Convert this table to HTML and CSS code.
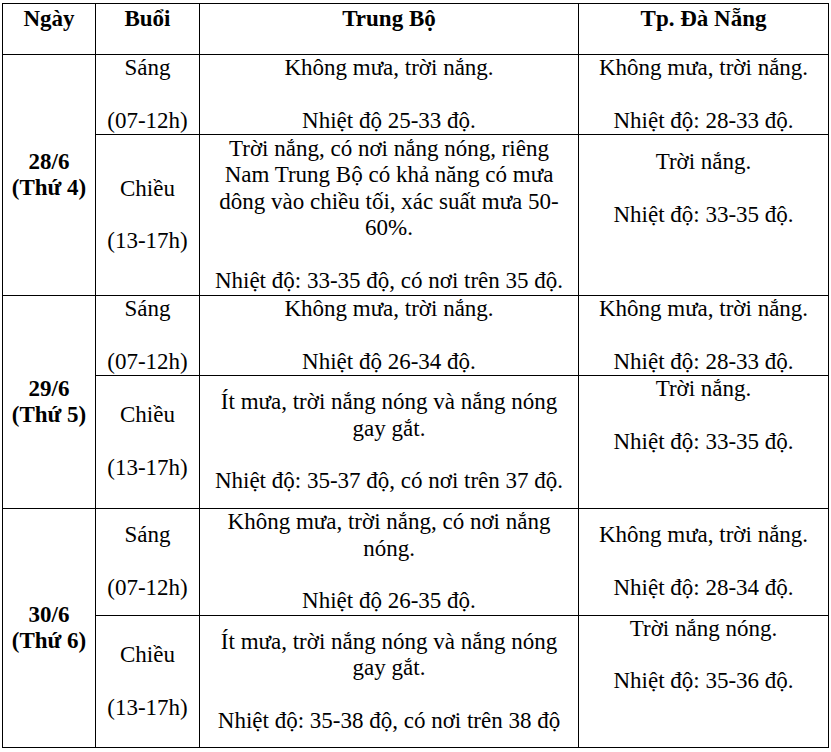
FILE: index.html
```html
<!DOCTYPE html>
<html lang="vi">
<head>
<meta charset="utf-8">
<title>Dự báo thời tiết</title>
<link rel="stylesheet" href="styles.css">
</head>
<body>
<table class="forecast">
  <colgroup>
    <col class="c-day">
    <col class="c-session">
    <col class="c-region">
    <col class="c-city">
  </colgroup>
  <thead>
    <tr class="h-head">
      <th>Ngày</th>
      <th>Buổi</th>
      <th>Trung Bộ</th>
      <th>Tp. Đà Nẵng</th>
    </tr>
  </thead>
  <tbody>
    <tr class="h-r1">
      <td class="day" rowspan="2">28/6<br>(Thứ 4)</td>
      <td>Sáng<br>&nbsp;<br>(07-12h)</td>
      <td>Không mưa, trời nắng.<br>&nbsp;<br>Nhiệt độ 25-33 độ.</td>
      <td>Không mưa, trời nắng.<br>&nbsp;<br>Nhiệt độ: 28-33 độ.</td>
    </tr>
    <tr class="h-r2">
      <td>Chiều<br>&nbsp;<br>(13-17h)</td>
      <td>Trời nắng, có nơi nắng nóng, riêng<br>Nam Trung Bộ có khả năng có mưa<br>dông vào chiều tối, xác suất mưa 50-<br>60%.<br>&nbsp;<br>Nhiệt độ: 33-35 độ, có nơi trên 35 độ.</td>
      <td>Trời nắng.<br>&nbsp;<br>Nhiệt độ: 33-35 độ.<br>&nbsp;<br>&nbsp;</td>
    </tr>
    <tr class="h-r3">
      <td class="day" rowspan="2">29/6<br>(Thứ 5)</td>
      <td>Sáng<br>&nbsp;<br>(07-12h)</td>
      <td>Không mưa, trời nắng.<br>&nbsp;<br>Nhiệt độ 26-34 độ.</td>
      <td>Không mưa, trời nắng.<br>&nbsp;<br>Nhiệt độ: 28-33 độ.</td>
    </tr>
    <tr class="h-r4">
      <td>Chiều<br>&nbsp;<br>(13-17h)</td>
      <td>Ít mưa, trời nắng nóng và nắng nóng<br>gay gắt.<br>&nbsp;<br>Nhiệt độ: 35-37 độ, có nơi trên 37 độ.</td>
      <td>Trời nắng.<br>&nbsp;<br>Nhiệt độ: 33-35 độ.<br>&nbsp;<br>&nbsp;</td>
    </tr>
    <tr class="h-r5">
      <td class="day" rowspan="2">30/6<br>(Thứ 6)</td>
      <td>Sáng<br>&nbsp;<br>(07-12h)</td>
      <td>Không mưa, trời nắng, có nơi nắng<br>nóng.<br>&nbsp;<br>Nhiệt độ 26-35 độ.</td>
      <td>Không mưa, trời nắng.<br>&nbsp;<br>Nhiệt độ: 28-34 độ.</td>
    </tr>
    <tr class="h-r6">
      <td>Chiều<br>&nbsp;<br>(13-17h)</td>
      <td>Ít mưa, trời nắng nóng và nắng nóng<br>gay gắt.<br>&nbsp;<br>Nhiệt độ: 35-38 độ, có nơi trên 38 độ</td>
      <td>Trời nắng nóng.<br>&nbsp;<br>Nhiệt độ: 35-36 độ.<br>&nbsp;<br>&nbsp;</td>
    </tr>
  </tbody>
</table>
</body>
</html>
```

FILE: styles.css
```css
html, body {
  margin: 0;
  background: #ffffff;
}

body {
  padding: 3px 0 0 2px;
  font-family: "Liberation Serif", "Times New Roman", serif;
  font-size: 23px;
  line-height: 26.3px;
  color: #000000;
}

.forecast {
  border-collapse: collapse;
  table-layout: fixed;
  width: 826px;
}

.c-day { width: 93px; }
.c-session { width: 104px; }
.c-region { width: 379px; }
.c-city { width: 250px; }

.forecast th,
.forecast td {
  border: 1px solid #000000;
  padding: 0 4px;
  text-align: center;
  white-space: nowrap;
}

.forecast th {
  font-weight: bold;
  vertical-align: top;
  padding-top: 2px;
}

.forecast td {
  vertical-align: middle;
}

.forecast td.day {
  font-weight: bold;
}

.h-head { height: 51px; }
.h-r1 { height: 80px; }
.h-r2 { height: 161px; }
.h-r3 { height: 79px; }
.h-r4 { height: 133px; }
.h-r5 { height: 107px; }
.h-r6 { height: 131px; }
```
